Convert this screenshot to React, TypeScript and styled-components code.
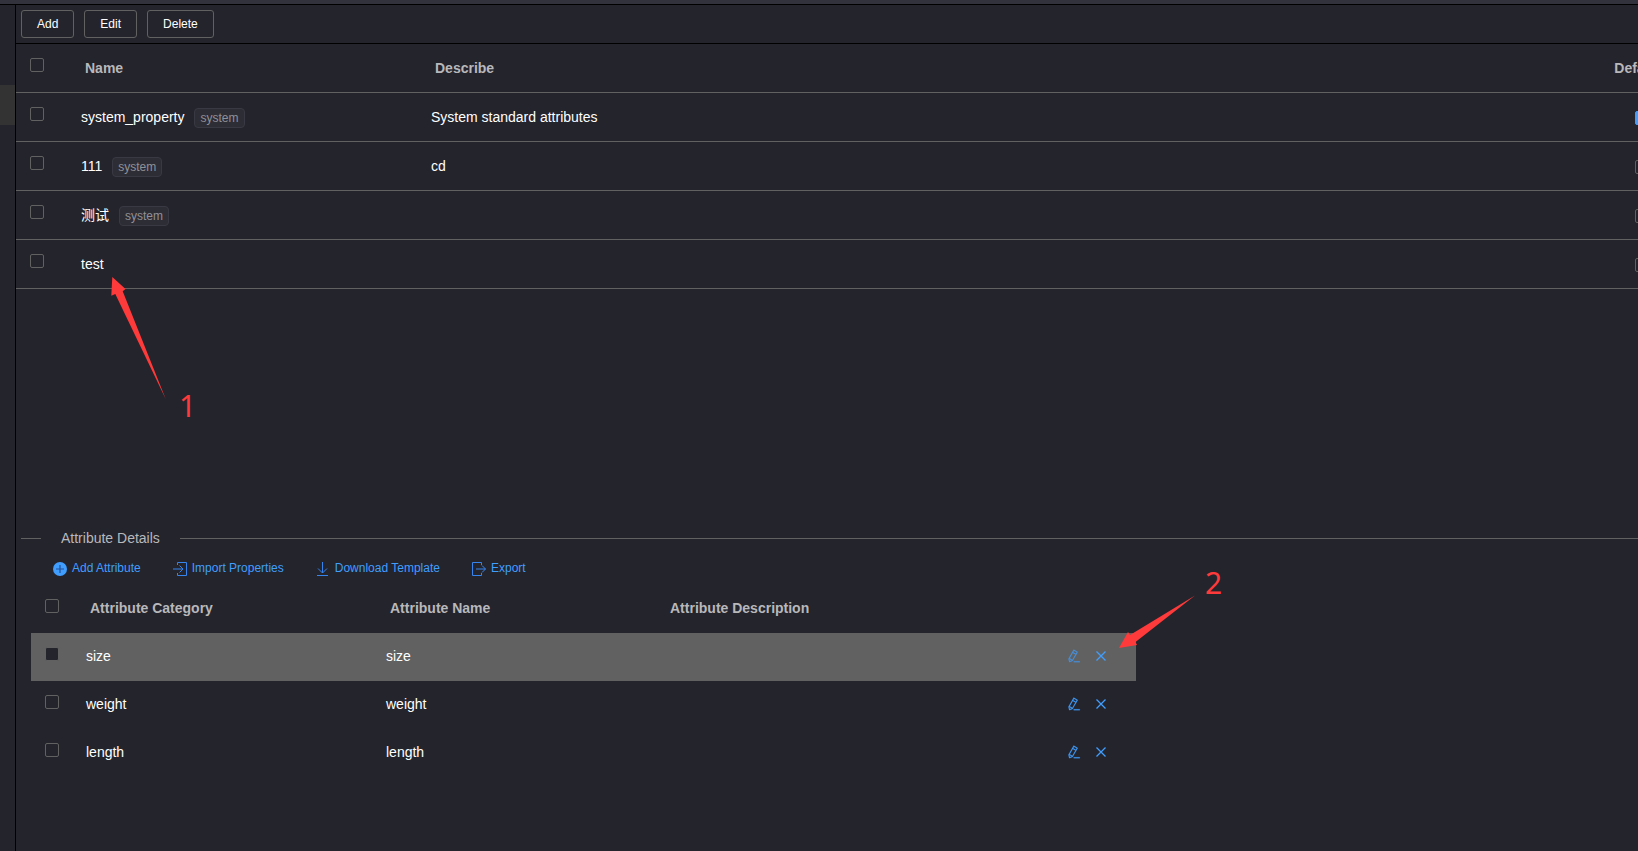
import React from "react";
import styled, { createGlobalStyle } from "styled-components";

const GlobalStyle = createGlobalStyle`
  * { box-sizing: border-box; }
  html, body, #root { height: 100%; }
  body {
    margin: 0;
    overflow: hidden;
    background: #24242d;
    color: #fff;
    font-family: "Liberation Sans", "Noto Sans CJK SC", sans-serif;
    font-size: 14px;
    line-height: 20px;
  }
`;

const Page = styled.div`
  position: relative;
  display: flex;
  flex-direction: column;
  min-height: 100%;
  overflow: hidden;
`;

const TopBar = styled.header`
  height: 5px;
  background: #32323d;
  border-bottom: 1px solid #000;
`;

const Body = styled.div`
  flex: 1;
  display: flex;
`;

const SideBar = styled.nav`
  flex: none;
  width: 16px;
  padding-top: 80px;
  border-right: 1px solid #000;
`;

const SideItem = styled.div`
  height: 40px;
  background: #333333;
`;

const Main = styled.main`
  flex: 1;
  min-width: 0;
  overflow: hidden;
  display: flex;
  flex-direction: column;
`;

const Toolbar = styled.div`
  display: flex;
  gap: 10px;
  padding: 5px;
  border-bottom: 1px solid #000;
`;

const ToolButton = styled.button`
  height: 28px;
  padding: 0 15px;
  border: 1px solid #616161;
  border-radius: 3px;
  background: transparent;
  color: #fff;
  font: inherit;
  font-size: 12px;
`;

const ListPane = styled.section`
  min-height: 484px;
`;

const Table = styled.table<{ $bleed?: boolean }>`
  width: ${(p) => (p.$bleed ? "calc(100% + 54px)" : "100%")};
  table-layout: fixed;
  border-collapse: separate;
  border-spacing: 0;
`;

const Row = styled.tr<{ $lined?: boolean; $selected?: boolean }>`
  height: ${(p) => (p.$lined ? 49 : 48)}px;
  background: ${(p) => (p.$selected ? "#616161" : "transparent")};
  & > * {
    border-bottom: ${(p) => (p.$lined ? "1px solid #616161" : "none")};
  }
`;

const HeadCell = styled.th<{ $center?: boolean }>`
  padding: 0 14px;
  text-align: ${(p) => (p.$center ? "center" : "left")};
  padding-right: ${(p) => (p.$center ? 22 : 14)}px;
  color: #b8b8bb;
  font-weight: bold;
`;

const Cell = styled.td<{ $center?: boolean }>`
  padding: 0 10px;
  text-align: ${(p) => (p.$center ? "center" : "left")};
  white-space: nowrap;
  & > input { vertical-align: middle; }
`;

const CheckCell = styled.td`
  padding: 14px 14px 0;
  vertical-align: top;
`;

const CheckBox = styled.input.attrs({ type: "checkbox" })`
  appearance: none;
  display: inline-block;
  vertical-align: top;
  width: 14px;
  height: 14px;
  margin: 0;
  border: 1px solid #616161;
  border-radius: 2px;
  background: #24242d;
  &:checked {
    border-color: #409eff;
    background: #409eff linear-gradient(#24242d, #24242d) center / 6px 1px no-repeat;
  }
`;

const Tag = styled.span`
  display: inline-block;
  height: 20px;
  margin-left: 10px;
  padding: 0 5px;
  border: 1px solid #393943;
  border-radius: 4px;
  background: #2d2d36;
  color: #909197;
  font-size: 12px;
  line-height: 18px;
`;

const Divider = styled.h2`
  display: flex;
  align-items: center;
  gap: 20px;
  margin: 0;
  padding-left: 5px;
  color: #b8b8bb;
  font-size: 14px;
  font-weight: normal;
  &::before, &::after {
    content: "";
    width: 20px;
    height: 1px;
    background: #616161;
  }
  &::after { flex: 1; }
`;

const Actions = styled.div`
  display: flex;
  gap: 32px;
  padding: 10px 37px 7px;
`;

const LinkButton = styled.button`
  display: flex;
  align-items: center;
  gap: 5px;
  height: 20px;
  padding: 0;
  border: 0;
  background: transparent;
  color: #409eff;
  font: inherit;
  font-size: 12px;
  svg { margin-top: 2px; color: #3684ee; }
`;

const DetailPane = styled.section`
  margin: 0 502px 0 15px;
  ${Cell}, ${HeadCell} { padding-bottom: 2px; }
`;

const RowActions = styled.div`
  display: flex;
  gap: 13px;
  padding-left: 21px;
`;

const IconButton = styled.button<{ $dim?: boolean }>`
  display: flex;
  padding: 0;
  border: 0;
  background: transparent;
  color: #409eff;
  opacity: ${(p) => (p.$dim ? 0.8 : 1)};
`;

const Notes = styled.div`
  position: absolute;
  inset: 0;
  pointer-events: none;
`;

const Arrow = styled.svg`
  position: absolute;
  left: 0;
  top: 0;
  fill: #ff3a3a;
`;

const Note = styled.span<{ $x: number; $y: number }>`
  position: absolute;
  left: ${(p) => p.$x}px;
  top: ${(p) => p.$y}px;
  color: #ff3a3a;
  font-family: "Noto Sans", sans-serif;
  font-size: 30px;
  line-height: 40px;
`;

const AddIcon = () => (
  <svg width="14" height="14" viewBox="0 0 14 14">
    <circle cx="7" cy="7" r="7" fill="#409eff" />
    <path d="M3 7h8M7 3v8" stroke="#24509a" strokeWidth="1.200" />
  </svg>
);

const ImportIcon = () => (
  <svg width="14" height="16" viewBox="0 0 14 16" fill="none" stroke="currentColor">
    <path d="M4.500 4V1.500h9v13h-9V12M0 8h9.500M6.500 4.500 10 8l-3.500 3.500" />
  </svg>
);

const DownloadIcon = () => (
  <svg width="14" height="14" viewBox="0 0 14 14" fill="none" stroke="currentColor">
    <path d="M6.500 0v11M2 6.500l4.500 4.500L11 6.500M1 13.500h11" />
  </svg>
);

const ExportIcon = () => (
  <svg width="14" height="16" viewBox="0 0 14 16" fill="none" stroke="currentColor">
    <path d="M9.500 4V1.500h-9v13h9V12M4 8h9.500M10 4.500 13.500 8 10 11.500" />
  </svg>
);

const EditIcon = () => (
  <svg width="14" height="14" viewBox="0 0 1024 1024" fill="currentColor" stroke="currentColor" strokeWidth="16">
    <path d="m199.040 672.640 193.984 112 224-387.968-193.920-112-224 388.032zm-23.872 60.160 32.896 148.288 144.896-45.696zM455.040 229.248l193.920 112 56.704-98.112-193.984-112-56.640 98.112zM104.320 708.800l384-665.024 304.768 175.936L409.152 884.800h.064l-248.448 78.336zm384 254.272v-64h448v64h-448z" />
  </svg>
);

const CloseIcon = () => (
  <svg width="14" height="14" viewBox="0 0 14 14" fill="none" stroke="currentColor" strokeWidth="1.300">
    <path d="M2.500 2.500l9 9M11.500 2.500l-9 9" />
  </svg>
);

const groups = [
  { name: "system_property", system: true, describe: "System standard attributes", isDefault: true },
  { name: "111", system: true, describe: "cd", isDefault: false },
  { name: "测试", system: true, describe: "", isDefault: false },
  { name: "test", system: false, describe: "", isDefault: false },
];

const attributes = ["size", "weight", "length"];

const links = [
  { label: "Add Attribute", Icon: AddIcon },
  { label: "Import Properties", Icon: ImportIcon },
  { label: "Download Template", Icon: DownloadIcon },
  { label: "Export", Icon: ExportIcon },
];

export default function App() {
  return (
    <Page>
      <GlobalStyle />
      <TopBar />
      <Body>
        <SideBar>
          <SideItem />
        </SideBar>
        <Main>
          <Toolbar>
            <ToolButton>Add</ToolButton>
            <ToolButton>Edit</ToolButton>
            <ToolButton>Delete</ToolButton>
          </Toolbar>
          <ListPane>
            <Table $bleed>
              <colgroup>
                <col width="55" />
                <col width="350" />
                <col />
                <col width="100" />
              </colgroup>
              <thead>
                <Row $lined>
                  <CheckCell><CheckBox aria-label="Select all groups" /></CheckCell>
                  <HeadCell>Name</HeadCell>
                  <HeadCell>Describe</HeadCell>
                  <HeadCell $center>Default</HeadCell>
                </Row>
              </thead>
              <tbody>
                {groups.map((g) => (
                  <Row $lined key={g.name}>
                    <CheckCell><CheckBox aria-label={`Select ${g.name}`} /></CheckCell>
                    <Cell>
                      {g.name}
                      {g.system && <Tag>system</Tag>}
                    </Cell>
                    <Cell>{g.describe}</Cell>
                    <Cell $center>
                      <CheckBox defaultChecked={g.isDefault} aria-label={`${g.name} is default`} />
                    </Cell>
                  </Row>
                ))}
              </tbody>
            </Table>
          </ListPane>
          <Divider>Attribute Details</Divider>
          <Actions>
            {links.map(({ label, Icon }) => (
              <LinkButton key={label}>
                <Icon />
                {label}
              </LinkButton>
            ))}
          </Actions>
          <DetailPane>
            <Table>
              <colgroup>
                <col width="45" />
                <col width="300" />
                <col width="280" />
                <col />
                <col width="100" />
              </colgroup>
              <thead>
                <Row>
                  <CheckCell><CheckBox aria-label="Select all attributes" /></CheckCell>
                  <HeadCell>Attribute Category</HeadCell>
                  <HeadCell>Attribute Name</HeadCell>
                  <HeadCell>Attribute Description</HeadCell>
                  <HeadCell />
                </Row>
              </thead>
              <tbody>
                {attributes.map((a, i) => (
                  <Row key={a} $selected={i === 0}>
                    <CheckCell><CheckBox aria-label={`Select ${a}`} /></CheckCell>
                    <Cell>{a}</Cell>
                    <Cell>{a}</Cell>
                    <Cell />
                    <Cell>
                      <RowActions>
                        <IconButton $dim={i === 0} aria-label={`Edit ${a}`}><EditIcon /></IconButton>
                        <IconButton aria-label={`Remove ${a}`}><CloseIcon /></IconButton>
                      </RowActions>
                    </Cell>
                  </Row>
                ))}
              </tbody>
            </Table>
          </DetailPane>
        </Main>
      </Body>
      <Notes>
        <Arrow width="1240" height="700" viewBox="0 0 1240 700">
          <path d="M112.300 277 111.300 295.700 115.300 294 165.700 399 122.700 291.300 125.500 289z" />
          <path d="M1119 648 1128 632 1130 635 1195 595.500 1135.500 642 1137 645z" />
        </Arrow>
        <Note $x={179} $y={386}>1</Note>
        <Note $x={1205} $y={563}>2</Note>
      </Notes>
    </Page>
  );
}
